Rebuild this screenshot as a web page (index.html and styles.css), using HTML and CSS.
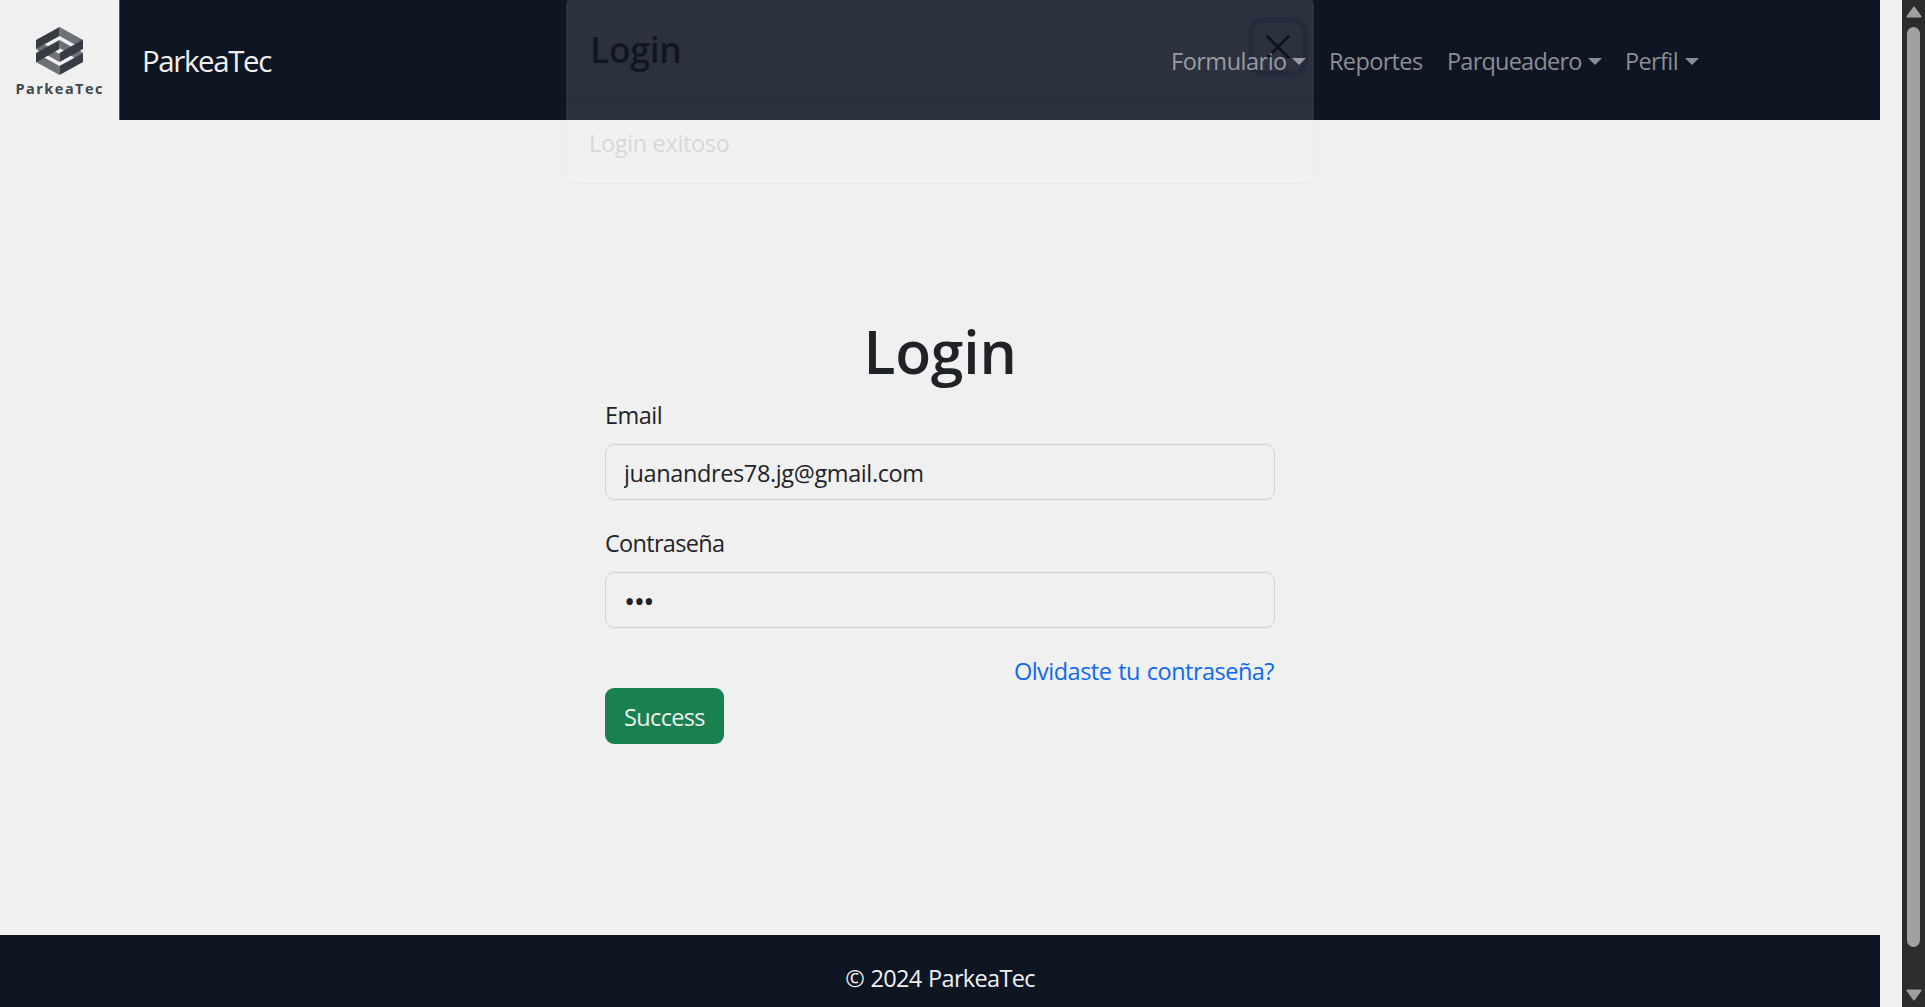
FILE: index.html
```html
<!DOCTYPE html>
<html lang="es">
<head>
<meta charset="utf-8">
<title>ParkeaTec</title>
<link rel="stylesheet" href="styles.css">
</head>
<body>
<div class="page">
  <header class="navbar">
    <div class="logo">
      <svg width="119" height="120" viewBox="0 0 119 120" role="img" aria-label="ParkeaTec">
        <g fill="#6d7077">
          <path d="M59.500 27 83 40v9L59.500 36z"/>
          <path d="M59.500 40 72 47l-6.500 4.500-6-3.500z"/>
          <path d="M44 44 50 47.500 41 53l-5-4z"/>
          <path d="M59.500 75 36 62v-9L59.500 66z"/>
          <path d="M59.500 62 47 55l6.500-4.500 6 3.500z"/>
          <path d="M75 58 69 54.500 78 49l5 4z"/>
        </g>
        <g fill="#373b43">
          <path d="M59.500 27 36 40v9L59.500 36z"/>
          <path d="M59.500 75 83 62v-9L59.500 66z"/>
          <path d="M59.500 40 36 53v9.500L59.500 49z"/>
          <path d="M59.500 62 83 49v-9.500L59.500 53z"/>
        </g>
        <text class="logo-text" x="15.500" y="94" textLength="87">ParkeaTec</text>
      </svg>
    </div>
    <a class="brand">ParkeaTec</a>
    <nav class="menu">
      <a class="link formulario">Formulario<i class="caret"></i></a>
      <a class="link reportes">Reportes</a>
      <a class="link parqueadero">Parqueadero<i class="caret"></i></a>
      <a class="link perfil">Perfil<i class="caret"></i></a>
    </nav>
  </header>
  <main class="main">
    <form class="form">
      <h1 class="title">Login</h1>
      <label class="label" for="email">Email</label>
      <input class="input" id="email" type="text" value="juanandres78.jg@gmail.com">
      <label class="label label-password" for="password">Contraseña</label>
      <input class="input input-password" id="password" type="password" value="abc">
      <a class="forgot">Olvidaste tu contraseña?</a>
      <button class="submit" type="button">Success</button>
    </form>
  </main>
  <footer class="footer">© 2024 ParkeaTec</footer>
  <div class="modal">
    <div class="modal-header">
      <h2 class="modal-title">Login</h2>
      <button class="close" type="button" aria-label="Close">
        <svg width="24" height="24" viewBox="0 0 24 24"><path d="M1.500 1.500l21 21M22.500 1.500l-21 21" stroke="#000" stroke-width="2.800" stroke-linecap="round"/></svg>
      </button>
    </div>
    <p class="modal-body">Login exitoso</p>
  </div>
</div>
<div class="scrollbar">
  <svg width="16" height="12" viewBox="0 0 16 12"><path d="M8 1.500 14.500 10.500h-13z" fill="#a0a0a0" stroke="#a0a0a0" stroke-width="2" stroke-linejoin="round"/></svg>
  <div class="thumb"></div>
  <svg class="down" width="16" height="12" viewBox="0 0 16 12"><path d="M8 10.500 14.500 1.500h-13z" fill="#a0a0a0" stroke="#a0a0a0" stroke-width="2" stroke-linejoin="round"/></svg>
</div>
</body>
</html>
```
FILE: styles.css
```css
* { box-sizing: border-box; }
body {
  margin: 0;
  height: 1007px;
  display: flex;
  justify-content: space-between;
  overflow: hidden;
  background: #f0f0f0;
  color: #1f2327;
  font: 23.5px/36px "Open Sans", sans-serif;
  letter-spacing: -0.5px;
}
h1, h2, p { margin: 0; }
.page {
  position: relative;
  width: 1880px;
  display: flex;
  flex-direction: column;
}
.navbar {
  height: 120px;
  display: flex;
  align-items: center;
  background: #0e1523;
}
.logo {
  width: 120px;
  height: 120px;
  background: #f0f0f0;
  border-right: 1px solid #555b66;
}
.logo svg { display: block; }
.logo-text {
  font: 700 14.5px "Open Sans", sans-serif;
  letter-spacing: 0;
  fill: #42464d;
}
.brand {
  margin-left: 22px;
  padding-top: 2px;
  color: #f0f0f0;
  font-size: 29.4px;
  letter-spacing: -1.35px;
}
.menu {
  margin-left: auto;
  padding: 2px 181px 0 0;
  display: flex;
  gap: 23px;
}
.link {
  display: flex;
  justify-content: space-between;
  align-items: center;
  color: #8b8e94;
}
.formulario { width: 135px; letter-spacing: -0.5px; }
.reportes { width: 95px; letter-spacing: -0.64px; }
.parqueadero { width: 155px; letter-spacing: -0.78px; }
.perfil { width: 74px; letter-spacing: -0.62px; }
.caret {
  border: 7px solid transparent;
  border-top-color: currentColor;
  border-bottom: 0;
}
.main {
  flex: 1;
  padding-top: 195px;
}
.form {
  width: 670px;
  margin: 0 auto;
  display: flex;
  flex-direction: column;
}
.title {
  margin-bottom: 10px;
  text-align: center;
  font-size: 58.8px;
  font-weight: 600;
  line-height: 72px;
  letter-spacing: -0.2px;
}
.label { margin-bottom: 11px; }
.label-password { margin-top: 25px; letter-spacing: -0.7px; }
.input {
  height: 56px;
  padding: 2px 18px 0;
  border: 1px solid #d0d3d6;
  border-radius: 9px;
  background: transparent;
  color: inherit;
  font: inherit;
  letter-spacing: -0.38px;
}
.input-password {
  padding: 0 18px;
  font-size: 30px;
  letter-spacing: -1.6px;
}
.forgot {
  height: 35px;
  margin: 25px 1px 0 0;
  align-self: flex-end;
  color: #0d69f0;
  letter-spacing: -0.52px;
  word-spacing: 1.3px;
}
.submit {
  width: 119px;
  height: 56px;
  padding: 2px 0 0;
  border: 0;
  border-radius: 9px;
  background: #19804f;
  color: #f0f0f0;
  font: inherit;
  letter-spacing: -0.65px;
}
.footer {
  height: 72px;
  padding-top: 25px;
  background: #0e1523;
  color: #f0f0f0;
  text-align: center;
  letter-spacing: -0.66px;
  word-spacing: 1px;
}
.modal {
  position: absolute;
  left: 565px;
  top: -6px;
  width: 750px;
  height: 190px;
  border: 1px solid rgba(0, 0, 0, .175);
  border-radius: 12px;
  background: #fff;
  background-clip: padding-box;
  color: #212529;
  opacity: .116;
}
.modal-header {
  height: 104px;
  padding: 0 6px 0 24px;
  display: flex;
  align-items: center;
  justify-content: space-between;
  border-bottom: 1px solid #dee2e6;
}
.modal-title {
  padding-top: 5px;
  font-size: 35.3px;
  font-weight: 600;
  line-height: 54px;
  letter-spacing: -0.2px;
}
.close {
  width: 48px;
  height: 48px;
  margin-right: 6px;
  padding: 12px;
  border: 0;
  border-radius: 9px;
  background: none;
  box-shadow: 0 0 0 6px rgba(13, 110, 253, .25);
}
.close svg { display: block; }
.modal-body {
  padding: 26px 23px;
  letter-spacing: -0.34px;
}
.scrollbar {
  width: 23px;
  padding: 6px 0;
  display: flex;
  flex-direction: column;
  align-items: center;
  background: #2c2c2c;
}
.thumb {
  width: 13px;
  height: 920px;
  margin-top: 9px;
  border-radius: 7px;
  background: #a0a0a0;
}
.down { margin-top: auto; }
```
